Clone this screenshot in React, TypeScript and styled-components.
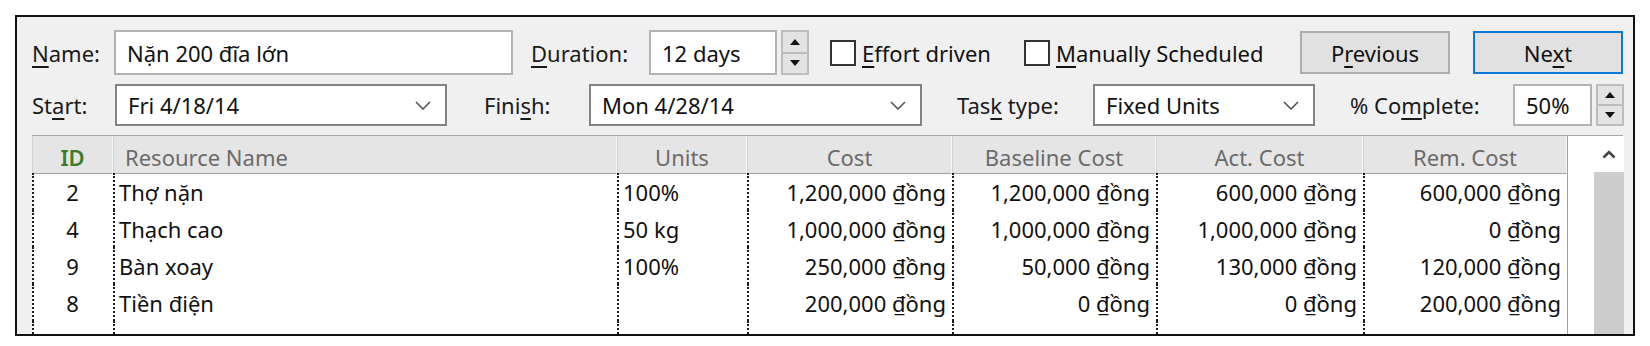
import React from "react";
import styled, { createGlobalStyle } from "styled-components";

const GlobalStyle = createGlobalStyle`
  *, *::before, *::after { box-sizing: border-box; }
  html, body { margin: 0; padding: 0; background: #fff; }
  body {
    width: 1650px;
    height: 346px;
    overflow: hidden;
    font-family: "Noto Sans", "Open Sans", sans-serif;
    font-size: 22px;
    color: #111;
  }
`;

const rows = [
  { id: 2, name: "Thợ nặn", units: "100%", cost: "1,200,000 ₫ồng", base: "1,200,000 ₫ồng", act: "600,000 ₫ồng", rem: "600,000 ₫ồng" },
  { id: 4, name: "Thạch cao", units: "50 kg", cost: "1,000,000 ₫ồng", base: "1,000,000 ₫ồng", act: "1,000,000 ₫ồng", rem: "0 ₫ồng" },
  { id: 9, name: "Bàn xoay", units: "100%", cost: "250,000 ₫ồng", base: "50,000 ₫ồng", act: "130,000 ₫ồng", rem: "120,000 ₫ồng" },
  { id: 8, name: "Tiền điện", units: "", cost: "200,000 ₫ồng", base: "0 ₫ồng", act: "0 ₫ồng", rem: "200,000 ₫ồng" },
];

const Page = styled.div`
  padding: 15px 0 0 15px;
`;

const Frame = styled.div`
  width: 1620px;
  height: 321px;
  border: 2px solid #111;
  background: #f0f0f0;
  overflow: hidden;
  padding: 13px 10px 0 15px;
`;

const Row = styled.div<{ $h: number; $mt?: number }>`
  display: flex;
  align-items: center;
  height: ${(p) => p.$h}px;
  margin-top: ${(p) => p.$mt || 0}px;
`;

const Label = styled.div<{ $w: number; $ml?: number }>`
  width: ${(p) => p.$w}px;
  margin-left: ${(p) => p.$ml || 0}px;
  flex: none;
  white-space: nowrap;
  color: #1a1a1a;
`;

const Key = styled.span`
  text-decoration: underline;
  text-decoration-thickness: 1.5px;
  text-underline-offset: 4px;
`;

const TextBox = styled.div<{ $w: number }>`
  width: ${(p) => p.$w}px;
  height: 100%;
  flex: none;
  display: flex;
  align-items: center;
  padding-left: 11px;
  background: #fff;
  border: 2px solid #b3b3b3;
  white-space: nowrap;
`;

const Combo = styled.div<{ $w: number }>`
  width: ${(p) => p.$w}px;
  height: 100%;
  flex: none;
  display: flex;
  align-items: center;
  justify-content: space-between;
  padding: 0 14px 0 11px;
  background: #fff;
  border: 2px solid #838383;
  white-space: nowrap;
`;

const Spinner = styled.div`
  width: 28px;
  height: 100%;
  margin-left: 4px;
  flex: none;
  display: flex;
  flex-direction: column;
  border: 2px solid #bdbdbd;
  background: #e3e3e3;
`;

const SpinHalf = styled.div<{ $down?: boolean }>`
  flex: 1;
  display: flex;
  align-items: center;
  justify-content: center;
  border-top: ${(p) => (p.$down ? "2px solid #bdbdbd" : "none")};
  &::after {
    content: "";
    width: 0;
    height: 0;
    border-left: 5px solid transparent;
    border-right: 5px solid transparent;
    ${(p) => (p.$down ? "border-top: 6px solid #111;" : "border-bottom: 6px solid #111;")}
  }
`;

const CheckField = styled.div<{ $w: number; $ml?: number }>`
  width: ${(p) => p.$w}px;
  margin-left: ${(p) => p.$ml || 0}px;
  flex: none;
  display: flex;
  align-items: center;
  gap: 6px;
  white-space: nowrap;
`;

const Box = styled.div`
  width: 26px;
  height: 26px;
  border: 2px solid #333;
  background: #fff;
`;

const Button = styled.div<{ $primary?: boolean; $ml?: number }>`
  width: 150px;
  height: 43px;
  margin-left: ${(p) => p.$ml || 0}px;
  flex: none;
  display: flex;
  align-items: center;
  justify-content: center;
  background: #e1e1e1;
  border: 2px solid ${(p) => (p.$primary ? "#0a78d4" : "#adadad")};
`;

const Table = styled.div`
  display: flex;
  margin-top: 9px;
  border-top: 1px solid #a9a9a9;
`;

const Grid = styled.div`
  display: grid;
  grid-template-columns: 81px 504px 130px 205px 204px 207px 204px;
  grid-auto-rows: 37px;
  background: #fff;
  border-right: 1px solid #a0a0a0;
`;

const HeadCell = styled.div<{ $align?: string; $green?: boolean }>`
  height: 38px;
  display: flex;
  align-items: center;
  justify-content: ${(p) => p.$align || "center"};
  padding-left: ${(p) => (p.$align === "flex-start" ? "11px" : "0")};
  padding-top: 4px;
  background: #e5e5e5;
  color: ${(p) => (p.$green ? "#3a7d2c" : "#6b6b6b")};
  font-weight: ${(p) => (p.$green ? 600 : 400)};
  border-left: 1px solid #d2d2d2;
  border-right: 1px solid #f7f7f7;
  border-bottom: 1px solid #a3a3a3;
  white-space: nowrap;
`;

const Cell = styled.div<{ $align?: string }>`
  display: flex;
  align-items: center;
  justify-content: ${(p) => p.$align || "flex-start"};
  padding: 0 6px 0 4px;
  border-left: 2px dotted #1c1c1c;
  white-space: nowrap;
  color: #111;
`;

const ScrollArea = styled.div`
  width: 56px;
  height: 200px;
  flex: none;
  background: #fff;
  display: flex;
  flex-direction: column;
  align-items: flex-end;
`;

const UpArrow = styled.div`
  width: 30px;
  height: 36px;
  display: flex;
  align-items: center;
  justify-content: center;
`;

const Thumb = styled.div`
  width: 30px;
  flex: 1;
  background: #cdcdcd;
`;

const Chevron = () => (
  <svg width="16" height="9" viewBox="0 0 16 9">
    <polyline points="1,1 8,8 15,1" fill="none" stroke="#555" strokeWidth="1.6" />
  </svg>
);

export default function App() {
  return (
    <Page>
      <GlobalStyle />
      <Frame>
        <Row $h={45}>
          <Label $w={82}>
            <Key>N</Key>ame:
          </Label>
          <TextBox $w={399}>Nặn 200 đĩa lớn</TextBox>
          <Label $w={118} $ml={18}>
            <Key>D</Key>uration:
          </Label>
          <TextBox $w={128}>12 days</TextBox>
          <Spinner>
            <SpinHalf />
            <SpinHalf $down />
          </Spinner>
          <CheckField $w={194} $ml={21}>
            <Box />
            <span>
              <Key>E</Key>ffort driven
            </span>
          </CheckField>
          <CheckField $w={276}>
            <Box />
            <span>
              <Key>M</Key>anually Scheduled
            </span>
          </CheckField>
          <Button>
            <span>
              P<Key>r</Key>evious
            </span>
          </Button>
          <Button $primary $ml={23}>
            <span>
              Ne<Key>x</Key>t
            </span>
          </Button>
        </Row>
        <Row $h={42} $mt={9}>
          <Label $w={83}>
            St<Key>a</Key>rt:
          </Label>
          <Combo $w={332}>
            Fri 4/18/14
            <Chevron />
          </Combo>
          <Label $w={105} $ml={37}>
            Fini<Key>s</Key>h:
          </Label>
          <Combo $w={333}>
            Mon 4/28/14
            <Chevron />
          </Combo>
          <Label $w={136} $ml={35}>
            Tas<Key>k</Key> type:
          </Label>
          <Combo $w={222}>
            Fixed Units
            <Chevron />
          </Combo>
          <Label $w={163} $ml={35}>
            % Co<Key>m</Key>plete:
          </Label>
          <TextBox $w={79}>50%</TextBox>
          <Spinner>
            <SpinHalf />
            <SpinHalf $down />
          </Spinner>
        </Row>
        <Table>
          <Grid>
            <HeadCell $green>ID</HeadCell>
            <HeadCell $align="flex-start">Resource Name</HeadCell>
            <HeadCell>Units</HeadCell>
            <HeadCell>Cost</HeadCell>
            <HeadCell>Baseline Cost</HeadCell>
            <HeadCell>Act. Cost</HeadCell>
            <HeadCell>Rem. Cost</HeadCell>
            {rows.map((r) => (
              <React.Fragment key={r.id}>
                <Cell $align="center">{r.id}</Cell>
                <Cell>{r.name}</Cell>
                <Cell>{r.units}</Cell>
                <Cell $align="flex-end">{r.cost}</Cell>
                <Cell $align="flex-end">{r.base}</Cell>
                <Cell $align="flex-end">{r.act}</Cell>
                <Cell $align="flex-end">{r.rem}</Cell>
              </React.Fragment>
            ))}
            {[0, 1, 2, 3, 4, 5, 6].map((i) => (
              <Cell key={i} />
            ))}
          </Grid>
          <ScrollArea>
            <UpArrow>
              <svg width="14" height="9" viewBox="0 0 14 9">
                <polyline points="1.5,7.5 7,2 12.5,7.5" fill="none" stroke="#444" strokeWidth="2.6" />
              </svg>
            </UpArrow>
            <Thumb />
          </ScrollArea>
        </Table>
      </Frame>
    </Page>
  );
}
